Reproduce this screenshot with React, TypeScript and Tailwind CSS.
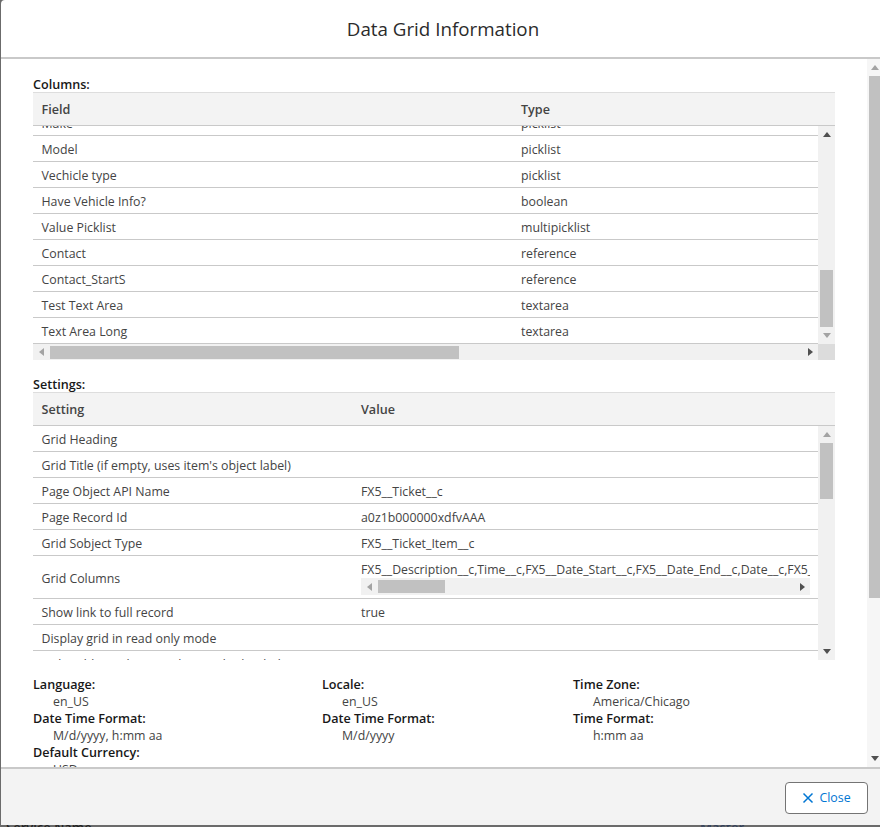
const font = { fontFamily: '"Open Sans", sans-serif' };

function Arrow({ dir, dark }: { dir: 'up' | 'down' | 'left' | 'right'; dark?: boolean }) {
  const pts = {
    up: '0,5 4,0 8,5',
    down: '0,0 4,5 8,0',
    left: '5,0 0,4 5,8',
    right: '0,0 5,4 0,8',
  }[dir];
  const vertical = dir === 'up' || dir === 'down';
  return (
    <svg width={vertical ? 8 : 5} height={vertical ? 5 : 8} viewBox={vertical ? '0 0 8 5' : '0 0 5 8'} className="block">
      <polygon points={pts} fill={dark ? '#505050' : '#a3a3a3'} />
    </svg>
  );
}

function VScroll({ height, thumbTop, thumbHeight, upDark, downDark }: { height: string; thumbTop: string; thumbHeight: string; upDark?: boolean; downDark?: boolean }) {
  return (
    <div className={`${height} w-[17px] shrink-0 bg-[#f1f1f1] flex flex-col items-center relative`}>
      <div className="h-[17px] w-full flex items-center justify-center shrink-0"><Arrow dir="up" dark={upDark} /></div>
      <div className="flex-1 w-full relative px-[2px]">
        <div className={`${thumbTop} ${thumbHeight} bg-[#c1c1c1]`} />
      </div>
      <div className="h-[17px] w-full flex items-center justify-center shrink-0"><Arrow dir="down" dark={downDark} /></div>
    </div>
  );
}

function Row({ a, b, first }: { a: string; b: string; first: number }) {
  return (
    <div className="h-[26px] pt-[4px] flex items-center border-b border-[#c9c9c9] text-[#444444] shrink-0">
      <div className={`${first === 0 ? 'w-[488px]' : 'w-[328px]'} pl-[8.5px] shrink-0`}>{a}</div>
      <div className="whitespace-nowrap">{b}</div>
    </div>
  );
}

const columns = [
  ['Make', 'picklist'],
  ['Model', 'picklist'],
  ['Vechicle type', 'picklist'],
  ['Have Vehicle Info?', 'boolean'],
  ['Value Picklist', 'multipicklist'],
  ['Contact', 'reference'],
  ['Contact_StartS', 'reference'],
  ['Test Text Area', 'textarea'],
  ['Text Area Long', 'textarea'],
];

function Label({ children }: { children: React.ReactNode }) {
  return <div className="font-semibold text-[12.6px] text-[#181818] leading-[17px]">{children}</div>;
}

function Value({ children }: { children: React.ReactNode }) {
  return <div className="pl-[20px] text-[#444444] leading-[17px]">{children}</div>;
}

function Head({ a, b, w }: { a: string; b: string; w: string }) {
  return (
    <div className="h-[34px] pt-[2px] flex items-center bg-[#f3f3f3] border-y border-[#dddddd] border-b-[#c9c9c9] font-semibold text-[12.6px] text-[#444444]">
      <div className={`${w} pl-[8.5px] shrink-0`}>{a}</div>
      <div>{b}</div>
    </div>
  );
}

export default function App() {
  return (
    <div style={font} className="relative w-[880px] h-[827px] overflow-hidden bg-[#6b6b6b] text-[12.35px]">
      <div className="absolute left-[6px] top-[819px] text-[13px] font-semibold text-[#222222] leading-[17px]">Service Name</div>
      <div className="absolute left-[700px] top-[819px] text-[13px] font-semibold text-[#33415c] leading-[17px]">Master</div>
      <div className="relative ml-[1px] h-[825px] bg-white rounded-tl-[4px] flex flex-col">
        <div className="h-[59px] pt-[2px] pl-[5px] shrink-0 border-b-2 border-[#c9c9c9] flex items-center justify-center text-[18.75px] text-[#2b2b2b]">
          Data Grid Information
        </div>
        <div className="h-[708px] shrink-0 flex overflow-hidden">
          <div className="flex-1 min-w-0 overflow-hidden pl-[32px] pr-[32px]">
            <div className="pt-[18px] leading-[15px] font-semibold text-[12.6px] text-[#181818]">Columns:</div>
            <Head a="Field" b="Type" w="w-[488px]" />
            <div className="flex h-[218px]">
              <div className="flex-1 min-w-0 overflow-hidden">
                <div className="-mt-[16px]">
                  {columns.map(([a, b]) => <Row key={a} a={a} b={b} first={0} />)}
                </div>
              </div>
              <VScroll height="h-[218px]" thumbTop="mt-[127px]" thumbHeight="h-[57px]" upDark />
            </div>
            <div className="flex h-[16px] bg-[#f1f1f1]">
              <div className="flex-1 flex items-center relative">
                <div className="w-[17px] flex justify-center"><Arrow dir="left" /></div>
                <div className="h-[13px] w-[409px] bg-[#c1c1c1]" />
                <div className="absolute right-[5px]"><Arrow dir="right" dark /></div>
              </div>
              <div className="w-[17px] bg-[#dcdcdc]" />
            </div>

            <div className="pt-[17px] leading-[15px] font-semibold text-[12.6px] text-[#181818]">Settings:</div>
            <Head a="Setting" b="Value" w="w-[328px]" />
            <div className="flex h-[234px]">
              <div className="flex-1 min-w-0 overflow-hidden">
                <Row a="Grid Heading" b="" first={1} />
                <Row a="Grid Title (if empty, uses item's object label)" b="" first={1} />
                <Row a="Page Object API Name" b="FX5__Ticket__c" first={1} />
                <Row a="Page Record Id" b="a0z1b000000xdfvAAA" first={1} />
                <Row a="Grid Sobject Type" b="FX5__Ticket_Item__c" first={1} />
                <div className="h-[43px] flex border-b border-[#c9c9c9] text-[#444444]">
                  <div className="w-[328px] pl-[8.5px] pt-[4px] shrink-0 flex items-center">Grid Columns</div>
                  <div className="flex-1 min-w-0 pr-[8px] pt-[5px]">
                    <div className="whitespace-nowrap overflow-hidden leading-[17px] text-[12.25px]">FX5__Description__c,Time__c,FX5__Date_Start__c,FX5__Date_End__c,Date__c,FX5__Price__c,FX5__Qty__c</div>
                    <div className="h-[17px] bg-[#f1f1f1] flex items-center relative">
                      <div className="w-[17px] flex justify-center"><Arrow dir="left" /></div>
                      <div className="h-[13px] w-[67px] bg-[#c1c1c1]" />
                      <div className="absolute right-[5px]"><Arrow dir="right" dark /></div>
                    </div>
                  </div>
                </div>
                <Row a="Show link to full record" b="true" first={1} />
                <Row a="Display grid in read only mode" b="" first={1} />
                <Row a="Hide Add New button when grid is loaded" b="" first={1} />
              </div>
              <VScroll height="h-[234px]" thumbTop="mt-0" thumbHeight="h-[56px]" downDark />
            </div>

            <div className="grid grid-cols-[289px_251px_1fr] pt-[16px]">
              <div>
                <Label>Language:</Label>
                <Value>en_US</Value>
                <Label>Date Time Format:</Label>
                <Value>M/d/yyyy, h:mm aa</Value>
                <Label>Default Currency:</Label>
                <Value>USD</Value>
              </div>
              <div>
                <Label>Locale:</Label>
                <Value>en_US</Value>
                <Label>Date Time Format:</Label>
                <Value>M/d/yyyy</Value>
              </div>
              <div>
                <Label>Time Zone:</Label>
                <Value>America/Chicago</Value>
                <Label>Time Format:</Label>
                <Value>h:mm aa</Value>
              </div>
            </div>
          </div>
          <div className="w-[13px] shrink-0 h-full bg-[#f6f6f6] flex flex-col relative">
            <div className="h-[17px] flex items-center justify-center pl-[2px] shrink-0"><Arrow dir="up" /></div>
            <div className="flex-1 pl-[2px]">
              <div className="h-[522px] bg-[#c1c1c1]" />
            </div>
            <div className="h-[17px] flex items-center justify-center pl-[2px] shrink-0"><Arrow dir="down" dark /></div>
          </div>
        </div>
        <div className="flex-1 border-t-2 border-[#c9c9c9] bg-[#f3f3f3] flex items-center justify-end pr-[12px]">
          <button className="w-[83px] h-[32px] mt-[1px] pt-[1px] flex items-center justify-center gap-[5px] bg-white border border-[#747474] rounded-[4px] text-[#0176d3] text-[12.4px]">
            <svg width="12" height="12" viewBox="0 0 12 12" className="block">
              <path d="M1.5 1.5 L10.5 10.5 M10.5 1.5 L1.5 10.5" stroke="#0176d3" strokeWidth="1.5" fill="none" />
            </svg>
            Close
          </button>
        </div>
      </div>
    </div>
  );
}
